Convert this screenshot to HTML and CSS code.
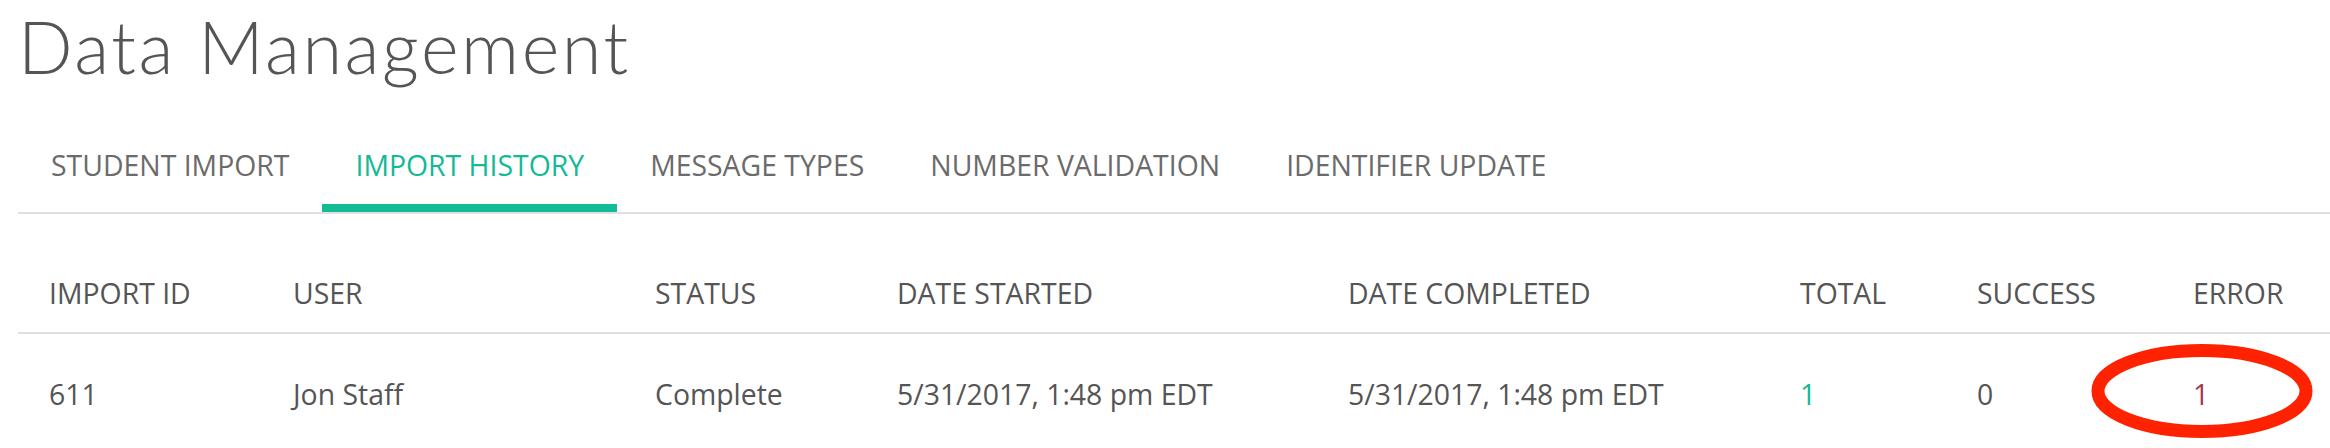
FILE: index.html
```html
<!DOCTYPE html>
<html lang="en">
<head>
<meta charset="utf-8">
<title>Data Management</title>
<link rel="stylesheet" href="styles.css">
</head>
<body>
<div class="page">
  <h1 class="title">Data Management</h1>
  <nav class="tabs">
    <a class="tab">STUDENT IMPORT</a>
    <a class="tab active">IMPORT HISTORY</a>
    <a class="tab">MESSAGE TYPES</a>
    <a class="tab">NUMBER VALIDATION</a>
    <a class="tab">IDENTIFIER UPDATE</a>
  </nav>
  <table class="grid">
    <colgroup>
      <col class="c1"><col class="c2"><col class="c3"><col class="c4"><col class="c5"><col class="c6"><col class="c7"><col class="c8">
    </colgroup>
    <thead>
      <tr>
        <th>IMPORT ID</th>
        <th>USER</th>
        <th>STATUS</th>
        <th>DATE STARTED</th>
        <th>DATE COMPLETED</th>
        <th>TOTAL</th>
        <th>SUCCESS</th>
        <th>ERROR</th>
      </tr>
    </thead>
    <tbody>
      <tr>
        <td>611</td>
        <td>Jon Staff</td>
        <td>Complete</td>
        <td>5/31/2017, 1:48 pm EDT</td>
        <td>5/31/2017, 1:48 pm EDT</td>
        <td class="num-total">1</td>
        <td>0</td>
        <td class="num-error">1
          <svg class="circle" width="222" height="96" viewBox="0 0 222 96" aria-hidden="true">
            <ellipse cx="111" cy="47" rx="104" ry="40.5" fill="none" stroke="#ff2200" stroke-width="13"/>
          </svg>
        </td>
      </tr>
    </tbody>
  </table>
</div>
</body>
</html>
```

FILE: styles.css
```css
html, body {
  margin: 0;
  padding: 0;
  background: #ffffff;
}

.page {
  padding-left: 18px;
  overflow: hidden;
}

.title {
  margin: 0;
  padding-top: 3px;
  font-family: Lato, "Liberation Sans", sans-serif;
  font-weight: 300;
  font-size: 72px;
  line-height: 86px;
  letter-spacing: 2.6px;
  color: #555555;
}

.tabs {
  display: flex;
  margin-top: 56px;
  border-bottom: 2px solid #e0e0e0;
}

.tab {
  display: block;
  padding: 0 33px 19px;
  border-bottom: 8px solid transparent;
  font-family: "Open Sans", sans-serif;
  font-size: 28.4px;
  line-height: 40px;
  color: #6b6b6b;
  white-space: nowrap;
}

.tab.active {
  color: #14b995;
  border-bottom-color: #12bc97;
}

.grid {
  border-collapse: collapse;
  table-layout: fixed;
  width: 2312px;
  font-family: "Open Sans", sans-serif;
  font-size: 28.4px;
  line-height: 40px;
  color: #555555;
}

.c1 { width: 244px; }
.c2 { width: 362px; }
.c3 { width: 242px; }
.c4 { width: 451px; }
.c5 { width: 452px; }
.c6 { width: 177px; }
.c7 { width: 216px; }
.c8 { width: 168px; }

.grid th {
  padding: 59px 0 19px 31px;
  text-align: left;
  font-weight: 400;
  border-bottom: 2px solid #e0e0e0;
  white-space: nowrap;
}

.grid td {
  padding: 40px 0 40px 31px;
  text-align: left;
  white-space: nowrap;
}

.num-total {
  color: #14b995;
}

.num-error {
  position: relative;
  color: #a5384a;
}

.circle {
  position: absolute;
  left: -71px;
  top: 10px;
}
```
